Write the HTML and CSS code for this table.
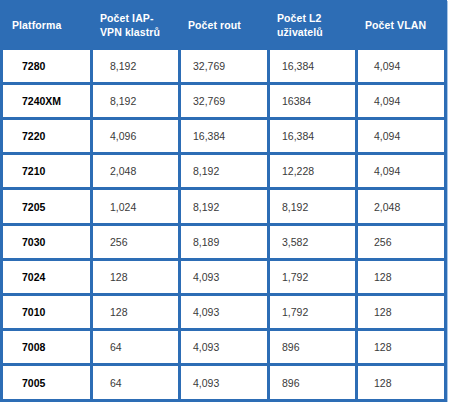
FILE: index.html
```html
<!DOCTYPE html>
<html lang="cs">
<head>
<meta charset="utf-8">
<link rel="stylesheet" href="styles.css">
</head>
<body>
<div class="tbl">
  <div class="th c1">Platforma</div>
  <div class="th">Počet IAP-<br>VPN klastrů</div>
  <div class="th">Počet rout</div>
  <div class="th">Počet L2<br>uživatelů</div>
  <div class="th">Počet VLAN</div>

  <div class="td name">7280</div><div class="td k2">8,192</div><div class="td k3">32,769</div><div class="td k4">16,384</div><div class="td k5">4,094</div>
  <div class="td name">7240XM</div><div class="td k2">8,192</div><div class="td k3">32,769</div><div class="td k4">16384</div><div class="td k5">4,094</div>
  <div class="td name">7220</div><div class="td k2">4,096</div><div class="td k3">16,384</div><div class="td k4">16,384</div><div class="td k5">4,094</div>
  <div class="td name">7210</div><div class="td k2">2,048</div><div class="td k3">8,192</div><div class="td k4">12,228</div><div class="td k5">4,094</div>
  <div class="td name">7205</div><div class="td k2">1,024</div><div class="td k3">8,192</div><div class="td k4">8,192</div><div class="td k5">2,048</div>
  <div class="td name">7030</div><div class="td k2">256</div><div class="td k3">8,189</div><div class="td k4">3,582</div><div class="td k5">256</div>
  <div class="td name">7024</div><div class="td k2">128</div><div class="td k3">4,093</div><div class="td k4">1,792</div><div class="td k5">128</div>
  <div class="td name">7010</div><div class="td k2">128</div><div class="td k3">4,093</div><div class="td k4">1,792</div><div class="td k5">128</div>
  <div class="td name">7008</div><div class="td k2">64</div><div class="td k3">4,093</div><div class="td k4">896</div><div class="td k5">128</div>
  <div class="td name">7005</div><div class="td k2">64</div><div class="td k3">4,093</div><div class="td k4">896</div><div class="td k5">128</div>
</div>
</body>
</html>
```
FILE: styles.css
```css
html, body {
  margin: 0;
  padding: 0;
  background: #ffffff;
}
body {
  font-family: "Liberation Sans", Arial, sans-serif;
}
.tbl {
  display: grid;
  width: 441px;
  grid-template-columns: 87px 85px 86px 85px 86px;
  grid-template-rows: 44px 32px 32px 32px 32px 33px 32px 32px 32px 32px 33px;
  gap: 3px;
  padding: 3px;
  background: #2d6db5;
  box-shadow: 1px 1px 0 #a9c6e6;
}
.th {
  display: flex;
  align-items: center;
  padding-left: 7px;
  color: #ffffff;
  font-weight: bold;
  font-size: 10.5px;
  line-height: 14px;
  letter-spacing: 0.1px;
}
.th.c1 {
  padding-left: 9px;
}
.td {
  display: flex;
  align-items: center;
  background: #ffffff;
  font-size: 10.5px;
  color: #3a3a3a;
}
.name {
  padding-left: 19px;
  font-weight: bold;
  color: #000000;
}
.k2 { padding-left: 17px; }
.k3 { padding-left: 12px; }
.k4 { padding-left: 12px; }
.k5 { padding-left: 16px; }
```
